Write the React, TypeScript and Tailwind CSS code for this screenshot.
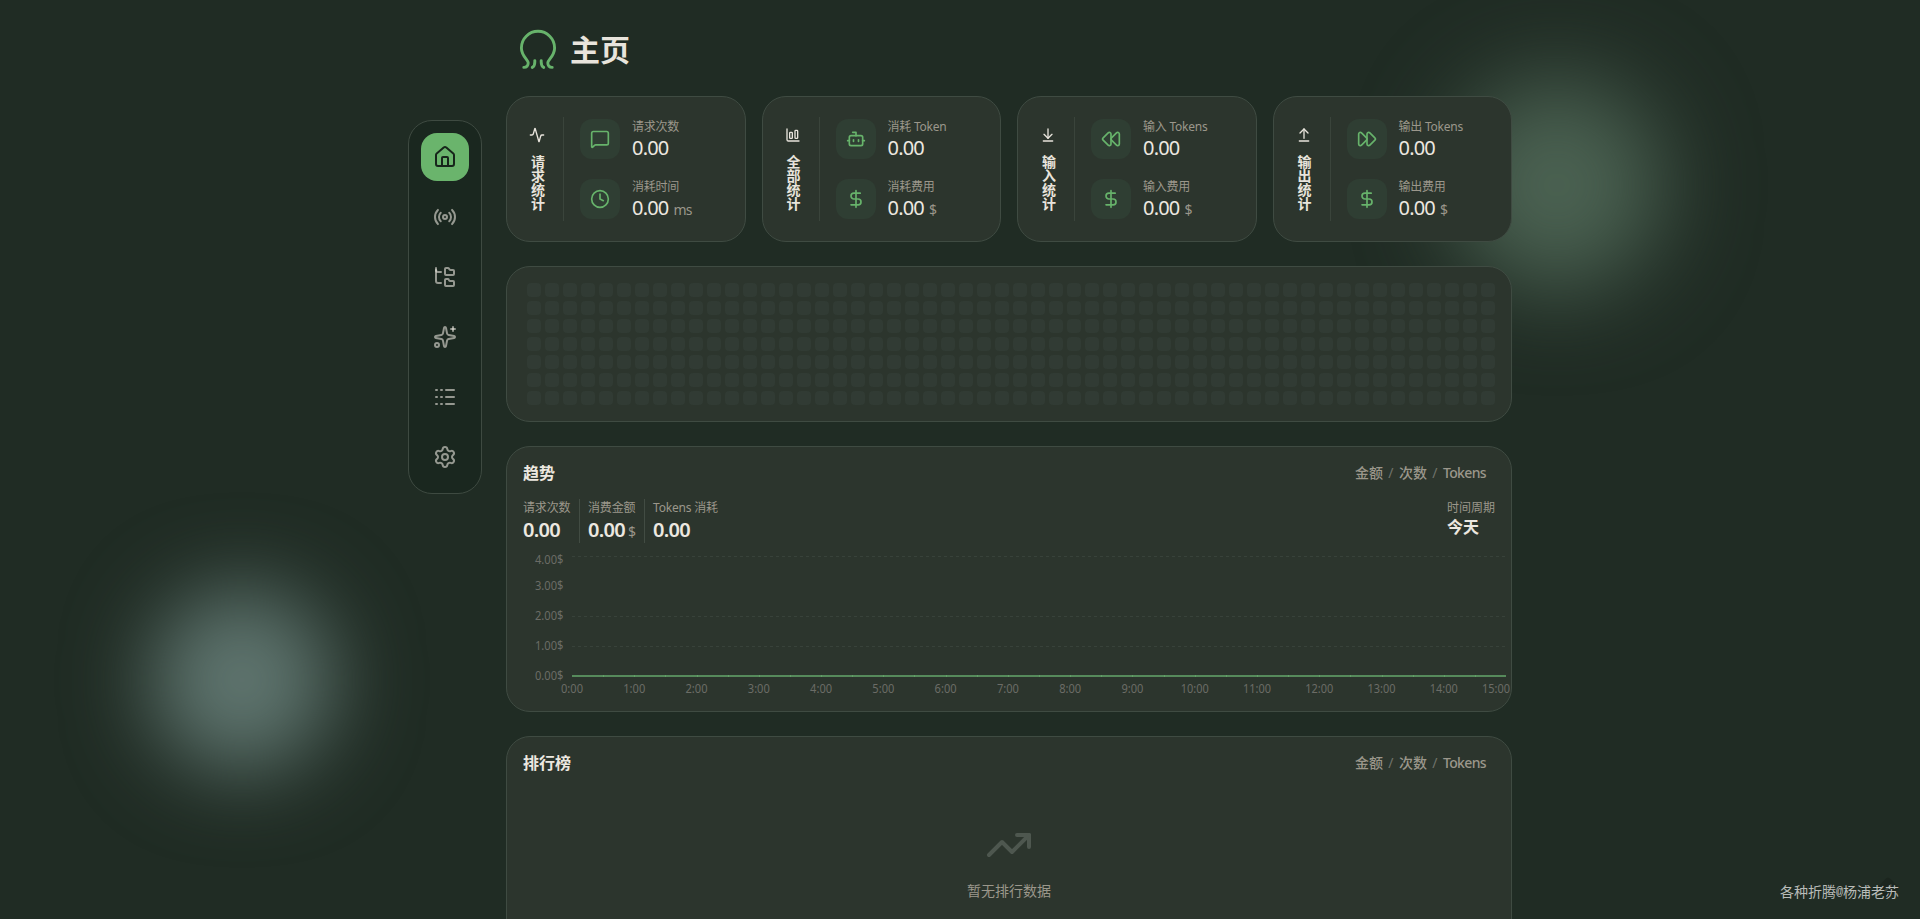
import type { ReactNode } from 'react';
import {
  Activity,
  ArrowDownToLine,
  ArrowUpFromLine,
  Bot,
  ChartColumnBig,
  Clock,
  DollarSign,
  FastForward,
  FolderTree,
  House,
  Logs,
  MessageSquare,
  Radio,
  Rewind,
  Settings,
  Sparkles,
  TrendingUp,
  type LucideIcon,
} from 'lucide-react';

type Metric = { icon: LucideIcon; label: string; value: string; unit?: string };
type StatGroup = { icon: LucideIcon; title: string; metrics: Metric[] };

const groups: StatGroup[] = [
  {
    icon: Activity,
    title: '请求统计',
    metrics: [
      { icon: MessageSquare, label: '请求次数', value: '0.00' },
      { icon: Clock, label: '消耗时间', value: '0.00', unit: 'ms' },
    ],
  },
  {
    icon: ChartColumnBig,
    title: '全部统计',
    metrics: [
      { icon: Bot, label: '消耗 Token', value: '0.00' },
      { icon: DollarSign, label: '消耗费用', value: '0.00', unit: '$' },
    ],
  },
  {
    icon: ArrowDownToLine,
    title: '输入统计',
    metrics: [
      { icon: Rewind, label: '输入 Tokens', value: '0.00' },
      { icon: DollarSign, label: '输入费用', value: '0.00', unit: '$' },
    ],
  },
  {
    icon: ArrowUpFromLine,
    title: '输出统计',
    metrics: [
      { icon: FastForward, label: '输出 Tokens', value: '0.00' },
      { icon: DollarSign, label: '输出费用', value: '0.00', unit: '$' },
    ],
  },
];

const navItems: LucideIcon[] = [House, Radio, FolderTree, Sparkles, Logs, Settings];

function Logo() {
  return (
    <svg className="size-10" viewBox="0 0 40 40" fill="none" stroke="#67b36b" strokeWidth="2.9" strokeLinecap="round">
      <path d="M5.8 38.4C8.4 38.4 10.2 36.6 10.2 33.8C10.2 30.8 3.4 27 3.4 18.9A16.6 16.6 0 0 1 36.6 18.9C36.6 27 29.8 30.8 29.8 33.8C29.8 36.6 31.6 38.4 34.2 38.4" />
      <path d="M16.8 31.6V33C16.8 35.8 15.9 37.7 14.3 38.4" />
      <path d="M23.2 31.6V33C23.2 35.8 24.1 37.7 25.7 38.4" />
    </svg>
  );
}

function Sidebar() {
  return (
    <nav className="mt-[120px] flex h-[374px] w-[74px] shrink-0 flex-col gap-3 rounded-3xl border border-[#3e4a41] bg-[#1a271f] p-3">
      {navItems.map((Icon, i) => (
        <button
          key={i}
          className={
            i === 0
              ? 'flex size-12 items-center justify-center rounded-2xl bg-[#6ab46c] text-[#17251b]'
              : 'flex size-12 items-center justify-center rounded-2xl text-[#e8e4dc]/60'
          }
        >
          <Icon className="size-6" />
        </button>
      ))}
    </nav>
  );
}

function Panel({ className, children }: { className: string; children: ReactNode }) {
  return <section className={`rounded-3xl border border-[#3f4b42] bg-[#2c352d] ${className}`}>{children}</section>;
}

function StatCard({ group }: { group: StatGroup }) {
  const TitleIcon = group.icon;
  return (
    <Panel className="flex h-[146px] p-5">
      <div className="flex w-[37px] shrink-0 flex-col items-center justify-center gap-3 border-r border-[#3a443b] pr-4 text-[#e8e4dc]">
        <TitleIcon className="size-4" />
        <h3 className="text-sm leading-5 font-bold [writing-mode:vertical-lr]">{group.title}</h3>
      </div>
      <div className="flex flex-col gap-4 pl-4">
        {group.metrics.map((m) => (
          <div key={m.label} className="flex h-11 items-center gap-3">
            <div className="flex size-10 items-center justify-center rounded-xl bg-[#2f3e33] text-[#67b36b]">
              <m.icon className="size-5" />
            </div>
            <div className="pt-0.5">
              <p className="text-xs leading-4 tracking-[-0.02em] whitespace-nowrap text-[#9b978b]">{m.label}</p>
              <div className="-mt-px flex items-baseline gap-[5px] leading-7">
                <span className="text-xl tracking-[-0.04em] text-[#ece8e0]">{m.value}</span>
                {m.unit && <span className="text-sm tracking-[-0.06em] text-[#9b978b]">{m.unit}</span>}
              </div>
            </div>
          </div>
        ))}
      </div>
    </Panel>
  );
}

function Heatmap() {
  return (
    <Panel className="flex h-[156px] justify-end p-4">
      <div className="grid grid-flow-col grid-cols-[repeat(54,14px)] grid-rows-[repeat(7,14px)] gap-1">
        {Array.from({ length: 378 }, (_, i) => (
          <span key={i} className="rounded bg-[#313b34]" />
        ))}
      </div>
    </Panel>
  );
}

function PanelHeader({ title }: { title: string }) {
  return (
    <div className="flex h-5 items-center justify-between">
      <h2 className="text-base font-bold text-[#ece8e0]">{title}</h2>
      <div className="flex items-center gap-[5px] pr-[9px] text-sm font-medium text-[#9b978b]">
        <span>金额</span>
        <span className="w-1.5 text-center font-normal text-[#6f726a]">/</span>
        <span>次数</span>
        <span className="w-1.5 text-center font-normal text-[#6f726a]">/</span>
        <span className="tracking-[-0.045em]">Tokens</span>
      </div>
    </div>
  );
}

function TrendStat({ label, value, unit }: { label: string; value: string; unit?: string }) {
  return (
    <div className="h-11 border-l border-[#424c43] px-2 whitespace-nowrap first:border-0 first:pl-0">
      <p className="pt-px text-xs leading-4 tracking-[-0.015em] text-[#9b978b]">{label}</p>
      <div className="flex w-12 items-baseline gap-[3px] leading-7">
        <span className="text-xl font-semibold tracking-[-0.035em] text-[#ece8e0]">{value}</span>
        {unit && <span className="text-sm tracking-[-0.06em] text-[#9b978b]">{unit}</span>}
      </div>
    </div>
  );
}

const yTicks = [
  { label: '4.00$', y: 17 },
  { label: '3.00$', y: 43 },
  { label: '2.00$', y: 73 },
  { label: '1.00$', y: 103 },
  { label: '0.00$', y: 133 },
];

const LEFT = 65;
const STEP = 62.27;

function TrendChart() {
  return (
    <svg className="block h-[168px] w-full text-xs" viewBox="0 0 1004 168" fill="#6b6c66">
      {[13.5, 73.5, 103.5].map((y) => (
        <path key={y} d={`M${LEFT} ${y}H999`} stroke="#38423a" strokeDasharray="3 3" />
      ))}
      {yTicks.map((t) => (
        <text key={t.label} x="56.5" y={t.y + 4} textAnchor="end" textLength="28.5" lengthAdjust="spacingAndGlyphs">
          {t.label}
        </text>
      ))}
      <path d={`M${LEFT} 133H999`} stroke="#568a5b" strokeWidth="2" />
      {Array.from({ length: 29 }, (_, i) => (
        <path key={i} d={`M${Math.round(LEFT + ((i + 1) * STEP) / 2)}.5 132v2`} stroke="#62a067" />
      ))}
      {Array.from({ length: 16 }, (_, i) => (
        <text
          key={i}
          x={i === 15 ? 989 : LEFT + i * STEP}
          y="150"
          textAnchor="middle"
          textLength={i > 9 ? 28 : 22}
          lengthAdjust="spacingAndGlyphs"
        >
          {`${i}:00`}
        </text>
      ))}
    </svg>
  );
}

export default function App() {
  return (
    <div className="relative isolate h-[919px] overflow-hidden bg-[#202c24] font-['Noto_Sans','Noto_Sans_CJK_SC',sans-serif] text-[#ece8e0]">
      <div className="absolute top-[588px] left-[150px] -z-10 size-[184px] rounded-full bg-[#5f756f] blur-[42px]" />
      <div className="absolute top-[79px] left-[1451px] -z-10 size-[212px] rounded-full bg-[#4b6252] blur-[46px]" />

      <div className="mx-auto flex w-[1104px] gap-6">
        <Sidebar />
        <main className="flex w-[1006px] flex-col gap-6">
          <header className="flex h-[72px] items-end gap-3 pb-[3px] pl-3">
            <Logo />
            <h1 className="h-10 text-3xl leading-[42px] font-bold text-[#e8e4dc]">主页</h1>
          </header>
          <div className="grid grid-cols-4 gap-4">
            {groups.map((g) => (
              <StatCard key={g.title} group={g} />
            ))}
          </div>
          <Heatmap />
          <Panel className="h-[266px]">
            <div className="px-4 pt-4">
              <PanelHeader title="趋势" />
              <div className="mt-4 flex justify-between">
                <div className="flex">
                  <TrendStat label="请求次数" value="0.00" />
                  <TrendStat label="消费金额" value="0.00" unit="$" />
                  <TrendStat label="Tokens 消耗" value="0.00" />
                </div>
                <div>
                  <p className="pt-px text-xs leading-4 text-[#9b978b]">时间周期</p>
                  <p className="-mt-px text-base leading-6 font-bold">今天</p>
                </div>
              </div>
            </div>
            <TrendChart />
          </Panel>
          <Panel className="h-[240px] p-4">
            <PanelHeader title="排行榜" />
            <div className="mt-[48px] flex flex-col items-center gap-3 text-sm text-[#9b978b]">
              <TrendingUp className="size-12 text-[#4e574f]" />
              <p>暂无排行数据</p>
            </div>
          </Panel>
        </main>
      </div>

      <div className="absolute top-[880px] left-[1880px] flex size-4 rotate-45 items-center justify-center rounded-[3px] bg-[#1b251e]">
        <span className="h-2.5 w-0.5 rounded bg-[#3f4941]" />
      </div>
      <p className="absolute top-[882px] left-[1780px] flex text-sm leading-5 text-[#b9bcb9]">
        各种折腾<span className="w-[7px] text-center font-['Liberation_Mono',monospace] text-[12px]">@</span>杨浦老苏
      </p>
    </div>
  );
}
